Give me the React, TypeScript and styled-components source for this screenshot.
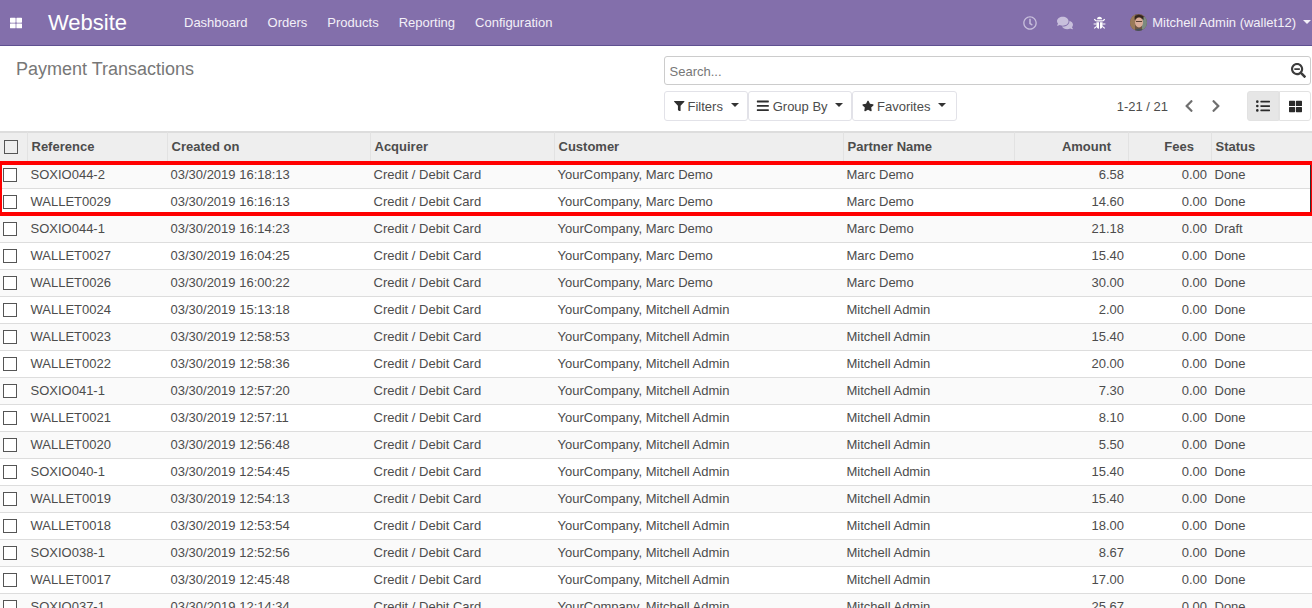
import React from "react";
import styled, { createGlobalStyle } from "styled-components";
import {
  FaThLarge, FaRegClock, FaComments, FaSearchMinus, FaFilter, FaBars, FaStar,
  FaChevronLeft, FaChevronRight, FaListUl,
} from "react-icons/fa";

const Global = createGlobalStyle`
  html, body { margin: 0; padding: 0; height: 608px; overflow: hidden; background: #fff; }
  body { font-family: "Liberation Sans", Arial, sans-serif; font-size: 13px; color: #4c4c4c; }
  * { box-sizing: border-box; }
`;

const Page = styled.div`
  position: relative;
  width: 1312px;
  height: 608px;
  overflow: hidden;
`;

const NavBar = styled.header`
  display: flex;
  align-items: center;
  height: 46px;
  background: #836fab;
  border-bottom: 1px solid #5f5090;
  color: #fff;
`;

const AppsButton = styled.span`
  display: flex;
  width: 48px;
  padding-left: 10px;
  font-size: 12px;
`;

const Brand = styled.span`
  width: 126px;
  font-size: 22px;
  line-height: 1;
`;

const NavMenu = styled.nav`
  display: flex;
  flex: 1;
`;

const NavLink = styled.a`
  padding: 0 10px;
  line-height: 45px;
  color: #f3f0f8;
`;

const Systray = styled.div`
  display: flex;
  align-items: center;
  padding-right: 1px;
`;

const TrayIcon = styled.span<{ $dim?: boolean; $w: number; $size: number }>`
  display: flex;
  justify-content: center;
  width: ${(p) => p.$w}px;
  font-size: ${(p) => p.$size}px;
  color: ${(p) => (p.$dim ? "#c8bfdc" : "#fff")};
`;

const AvatarSlot = styled.span`
  display: flex;
  justify-content: flex-end;
  width: 32px;
`;

const UserName = styled.span`
  margin-left: 5px;
  color: #f3f0f8;
`;

const Caret = styled.i<{ $color?: string; $gap?: number }>`
  display: inline-block;
  width: 0;
  height: 0;
  margin-left: ${(p) => p.$gap ?? 7}px;
  margin-bottom: 2px;
  border-top: 4px solid ${(p) => p.$color ?? "#333"};
  border-left: 4px solid transparent;
  border-right: 4px solid transparent;
`;

const ControlPanel = styled.section`
  display: flex;
  height: 85px;
`;

const TitleColumn = styled.div`
  width: 664px;
  padding: 12px 0 0 16px;
`;

const PageTitle = styled.h1`
  margin: 0;
  font-size: 18px;
  font-weight: 400;
  line-height: 22px;
  color: #777;
`;

const ToolColumn = styled.div`
  display: flex;
  flex-direction: column;
  width: 647px;
  padding-top: 10px;
`;

const SearchBox = styled.div`
  display: flex;
  align-items: center;
  justify-content: space-between;
  height: 29px;
  padding: 0 4px 0 4.5px;
  border: 1px solid #ccc;
  border-radius: 3px;
  color: #777;
`;

const Placeholder = styled.span`
  padding-top: 2px;
`;

const SearchIcon = styled.span`
  display: flex;
  font-size: 15px;
  color: #3c3c3c;
`;

const ToolRow = styled.div`
  display: flex;
  align-items: center;
  margin-top: 6px;
`;

const MenuButton = styled.button<{ $w: number; $pad: number; $icon: number }>`
  display: flex;
  align-items: center;
  gap: 3px;
  width: ${(p) => p.$w}px;
  height: 30px;
  padding: 0 0 0 ${(p) => p.$pad}px;
  background: #fff;
  border: 1px solid #e2e2e8;
  border-radius: 3px;
  font: inherit;
  color: #4c4c4c;
  svg { font-size: ${(p) => p.$icon}px; color: #2f2f2f; }
`;

const Pager = styled.div`
  display: flex;
  align-items: center;
  margin-left: auto;
  color: #4c4c4c;
`;

const PagerArrow = styled.span<{ $left: number }>`
  display: flex;
  margin-left: ${(p) => p.$left}px;
  font-size: 14px;
  color: #6f6f6f;
`;

const ViewSwitch = styled.div`
  display: flex;
  margin-left: 24px;
`;

const ViewButton = styled.span<{ $active?: boolean }>`
  display: flex;
  align-items: center;
  justify-content: center;
  width: 32px;
  height: 30px;
  font-size: ${(p) => (p.$active ? 14 : 13)}px;
  color: #2a2a2a;
  border: 1px solid #e2e2e2;
  background: ${(p) => (p.$active ? "#e6e6e6" : "#fff")};
  border-radius: ${(p) => (p.$active ? "3px 0 0 3px" : "0 3px 3px 0")};
`;

const Table = styled.table`
  width: 1312px;
  table-layout: fixed;
  border-collapse: separate;
  border-spacing: 0;
`;

const HeadCell = styled.th<{ $right?: boolean }>`
  height: 31px;
  padding: 0 ${(p) => (p.$right ? "17px" : "4px")} 3px 3.5px;
  background: #eee;
  border-top: 2px solid #ddd;
  border-left: 1px solid #e2e2e2;
  font-weight: 700;
  color: #4c4c4c;
  text-align: ${(p) => (p.$right ? "right" : "left")};
  &:first-child { border-left: 0; padding: 0 0 1px 4px; }
`;

const Row = styled.tr`
  &:nth-child(odd) td { background: #fafafa; }
`;

const Cell = styled.td<{ $right?: boolean }>`
  height: 27px;
  padding: 0 4px 2px 3.5px;
  border-bottom: 1px solid #ddd;
  white-space: nowrap;
  overflow: hidden;
  text-align: ${(p) => (p.$right ? "right" : "left")};
  &:first-child { padding: 0 0 2px 3px; }
`;

const Check = styled.span`
  display: block;
  width: 14px;
  height: 14px;
  margin-top: 2px;
  background: #fff;
  border: 1px solid #555;
`;

const HeadCheck = styled(Check)`
  margin-top: 0;
  background: transparent;
`;

const Highlight = styled.div`
  position: absolute;
  left: 0;
  top: 161px;
  width: 1312px;
  height: 55px;
  border-style: solid;
  border-color: #f00;
  border-width: 4px 1px 4px 2px;
  box-shadow: inset -1px 0 0 #333;
  pointer-events: none;
`;

const columns = [27, 140, 203, 184, 289, 171, 114, 83, 101];

const marc = ["YourCompany, Marc Demo", "Marc Demo"];
const mitchell = ["YourCompany, Mitchell Admin", "Mitchell Admin"];

const rows: [string, string, string[], string, string][] = [
  ["SOXIO044-2", "16:18:13", marc, "6.58", "Done"],
  ["WALLET0029", "16:16:13", marc, "14.60", "Done"],
  ["SOXIO044-1", "16:14:23", marc, "21.18", "Draft"],
  ["WALLET0027", "16:04:25", marc, "15.40", "Done"],
  ["WALLET0026", "16:00:22", marc, "30.00", "Done"],
  ["WALLET0024", "15:13:18", mitchell, "2.00", "Done"],
  ["WALLET0023", "12:58:53", mitchell, "15.40", "Done"],
  ["WALLET0022", "12:58:36", mitchell, "20.00", "Done"],
  ["SOXIO041-1", "12:57:20", mitchell, "7.30", "Done"],
  ["WALLET0021", "12:57:11", mitchell, "8.10", "Done"],
  ["WALLET0020", "12:56:48", mitchell, "5.50", "Done"],
  ["SOXIO040-1", "12:54:45", mitchell, "15.40", "Done"],
  ["WALLET0019", "12:54:13", mitchell, "15.40", "Done"],
  ["WALLET0018", "12:53:54", mitchell, "18.00", "Done"],
  ["SOXIO038-1", "12:52:56", mitchell, "8.67", "Done"],
  ["WALLET0017", "12:45:48", mitchell, "17.00", "Done"],
  ["SOXIO037-1", "12:14:34", mitchell, "25.67", "Done"],
];

const BugIcon = () => (
  <svg width="13" height="14" viewBox="0 0 13 14" fill="none" stroke="#fff">
    <path d="M4 3.2 A2.5 2.5 0 0 1 9 3.2Z" fill="#fff" stroke="none" />
    <path d="M3.4 4.2H9.6V5.4H3.4ZM3.4 6.2H6V12.8Q3.4 12.4 3.4 9.5ZM7 6.2H9.6V9.5Q9.6 12.4 7 12.8Z" fill="#fff" stroke="none" />
    <path d="M1.2 3.2 3.4 5M11.8 3.2 9.6 5M.6 8H3.4M12.4 8H9.6M1.2 12.4 3.6 10.4M11.8 12.4 9.4 10.4" strokeWidth="1.2" />
  </svg>
);

const Avatar = () => (
  <svg width="17" height="17" viewBox="0 0 17 17">
    <defs>
      <clipPath id="av"><circle cx="8.5" cy="8.5" r="8.5" /></clipPath>
    </defs>
    <g clipPath="url(#av)">
      <rect width="17" height="17" fill="#6e5643" />
      <rect x="0" y="0" width="5" height="17" fill="#9a7a58" />
      <rect x="12" y="3" width="5" height="14" fill="#7b8a80" />
      <ellipse cx="9" cy="8.5" rx="4" ry="5" fill="#d9ab98" />
      <path d="M4.6 6 Q9 0 13.6 6 L13.4 2.5 Q9 -1 4.6 2.5Z" fill="#33241e" />
      <rect x="6" y="7" width="6" height="1" fill="#5a4034" />
      <path d="M3 17 Q9 12 15 17Z" fill="#46505a" />
    </g>
  </svg>
);

export default function App() {
  return (
    <Page>
      <Global />
      <NavBar>
        <AppsButton><FaThLarge /></AppsButton>
        <Brand>Website</Brand>
        <NavMenu>
          <NavLink>Dashboard</NavLink>
          <NavLink>Orders</NavLink>
          <NavLink>Products</NavLink>
          <NavLink>Reporting</NavLink>
          <NavLink>Configuration</NavLink>
        </NavMenu>
        <Systray>
          <TrayIcon $dim $w={34} $size={14}><FaRegClock /></TrayIcon>
          <TrayIcon $dim $w={36} $size={16}><FaComments /></TrayIcon>
          <TrayIcon $w={32} $size={14}><BugIcon /></TrayIcon>
          <AvatarSlot><Avatar /></AvatarSlot>
          <UserName>Mitchell Admin (wallet12)</UserName>
          <Caret $color="#f3f0f8" />
        </Systray>
      </NavBar>

      <ControlPanel>
        <TitleColumn>
          <PageTitle>Payment Transactions</PageTitle>
        </TitleColumn>
        <ToolColumn>
          <SearchBox>
            <Placeholder>Search...</Placeholder>
            <SearchIcon><FaSearchMinus /></SearchIcon>
          </SearchBox>
          <ToolRow>
            <MenuButton $w={84} $pad={9} $icon={10.5}><FaFilter />Filters<Caret $gap={5.5} /></MenuButton>
            <MenuButton $w={104} $pad={7} $icon={13.7}><FaBars />Group By<Caret $gap={4.4} /></MenuButton>
            <MenuButton $w={105} $pad={9} $icon={12}><FaStar />Favorites<Caret $gap={5} /></MenuButton>
            <Pager>
              1-21 / 21
              <PagerArrow $left={13.5}><FaChevronLeft /></PagerArrow>
              <PagerArrow $left={13.5}><FaChevronRight /></PagerArrow>
            </Pager>
            <ViewSwitch>
              <ViewButton $active><FaListUl /></ViewButton>
              <ViewButton><FaThLarge /></ViewButton>
            </ViewSwitch>
          </ToolRow>
        </ToolColumn>
      </ControlPanel>

      <Table>
        <colgroup>
          {columns.map((w, i) => <col key={i} width={w} />)}
        </colgroup>
        <thead>
          <tr>
            <HeadCell><HeadCheck /></HeadCell>
            <HeadCell>Reference</HeadCell>
            <HeadCell>Created on</HeadCell>
            <HeadCell>Acquirer</HeadCell>
            <HeadCell>Customer</HeadCell>
            <HeadCell>Partner Name</HeadCell>
            <HeadCell $right>Amount</HeadCell>
            <HeadCell $right>Fees</HeadCell>
            <HeadCell>Status</HeadCell>
          </tr>
        </thead>
        <tbody>
          {rows.map(([ref, time, who, amount, status]) => (
            <Row key={ref}>
              <Cell><Check /></Cell>
              <Cell>{ref}</Cell>
              <Cell>03/30/2019 {time}</Cell>
              <Cell>Credit / Debit Card</Cell>
              <Cell>{who[0]}</Cell>
              <Cell>{who[1]}</Cell>
              <Cell $right>{amount}</Cell>
              <Cell $right>0.00</Cell>
              <Cell>{status}</Cell>
            </Row>
          ))}
        </tbody>
      </Table>
      <Highlight />
    </Page>
  );
}
